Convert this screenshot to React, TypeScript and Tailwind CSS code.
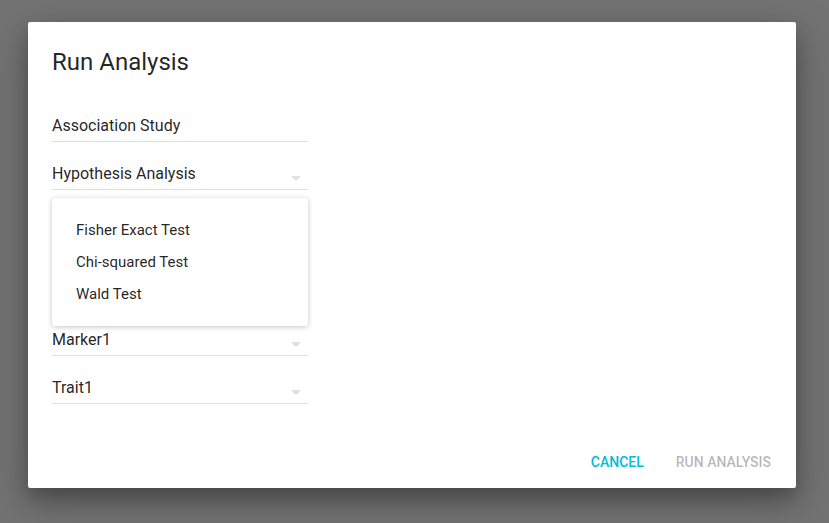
import React from "react";

const font = { fontFamily: "Roboto, 'Liberation Sans', sans-serif" };

function ArrowDrop() {
  return (
    <svg viewBox="0 0 24 24" className="w-6 h-6" fill="#e0e0e0">
      <path d="M7 10l5 5 5-5z" />
    </svg>
  );
}

function Field({ value, select }: { value: string; select?: boolean }) {
  return (
    <div className="h-12 w-64 flex flex-col justify-end pb-2">
      <div className="flex items-center justify-between h-6 mb-[3px]">
        <span className="text-[16px] leading-6 text-black/[0.87]">{value}</span>
        {select && (
          <span className="mt-[8px]">
            <ArrowDrop />
          </span>
        )}
      </div>
      <div className="h-px bg-[#e0e0e0]" />
    </div>
  );
}

const options = ["Fisher Exact Test", "Chi-squared Test", "Wald Test"];

export default function App() {
  return (
    <div className="w-[829px] h-[523px] bg-[#737373] overflow-hidden pt-[22px] pl-[28px]" style={font}>
      <div className="relative w-[768px] h-[466px] bg-white rounded-[2px] flex flex-col shadow-[0_14px_45px_rgba(0,0,0,0.25),0_10px_18px_rgba(0,0,0,0.22)]">
        <h3 className="px-6 pt-6 pb-5 text-[24px] leading-8 font-normal text-black/[0.87]">
          Run Analysis
        </h3>
        <div className="px-6 pt-1 pb-6 flex flex-col">
          <Field value="Association Study" />
          <Field value="Hypothesis Analysis" select />
          <div className="h-[118px]" />
          <Field value="Marker1" select />
          <Field value="Trait1" select />
        </div>
        <div className="flex justify-end py-2 pl-2 pr-[9px] mt-auto">
          <button className="h-9 px-4 text-[14px] font-medium uppercase text-[#00bcd4]">
            Cancel
          </button>
          <button className="h-9 px-4 text-[14px] font-medium uppercase text-black/30" disabled>
            Run Analysis
          </button>
        </div>

        <div className="absolute left-6 top-[176px] w-64 bg-white rounded-[2px] py-4 shadow-[0_1px_6px_rgba(0,0,0,0.12),0_1px_4px_rgba(0,0,0,0.12)]">
          {options.map((o) => (
            <div key={o} className="px-6 h-8 leading-8 text-[15px] text-black/[0.87]">
              {o}
            </div>
          ))}
        </div>
      </div>
    </div>
  );
}
